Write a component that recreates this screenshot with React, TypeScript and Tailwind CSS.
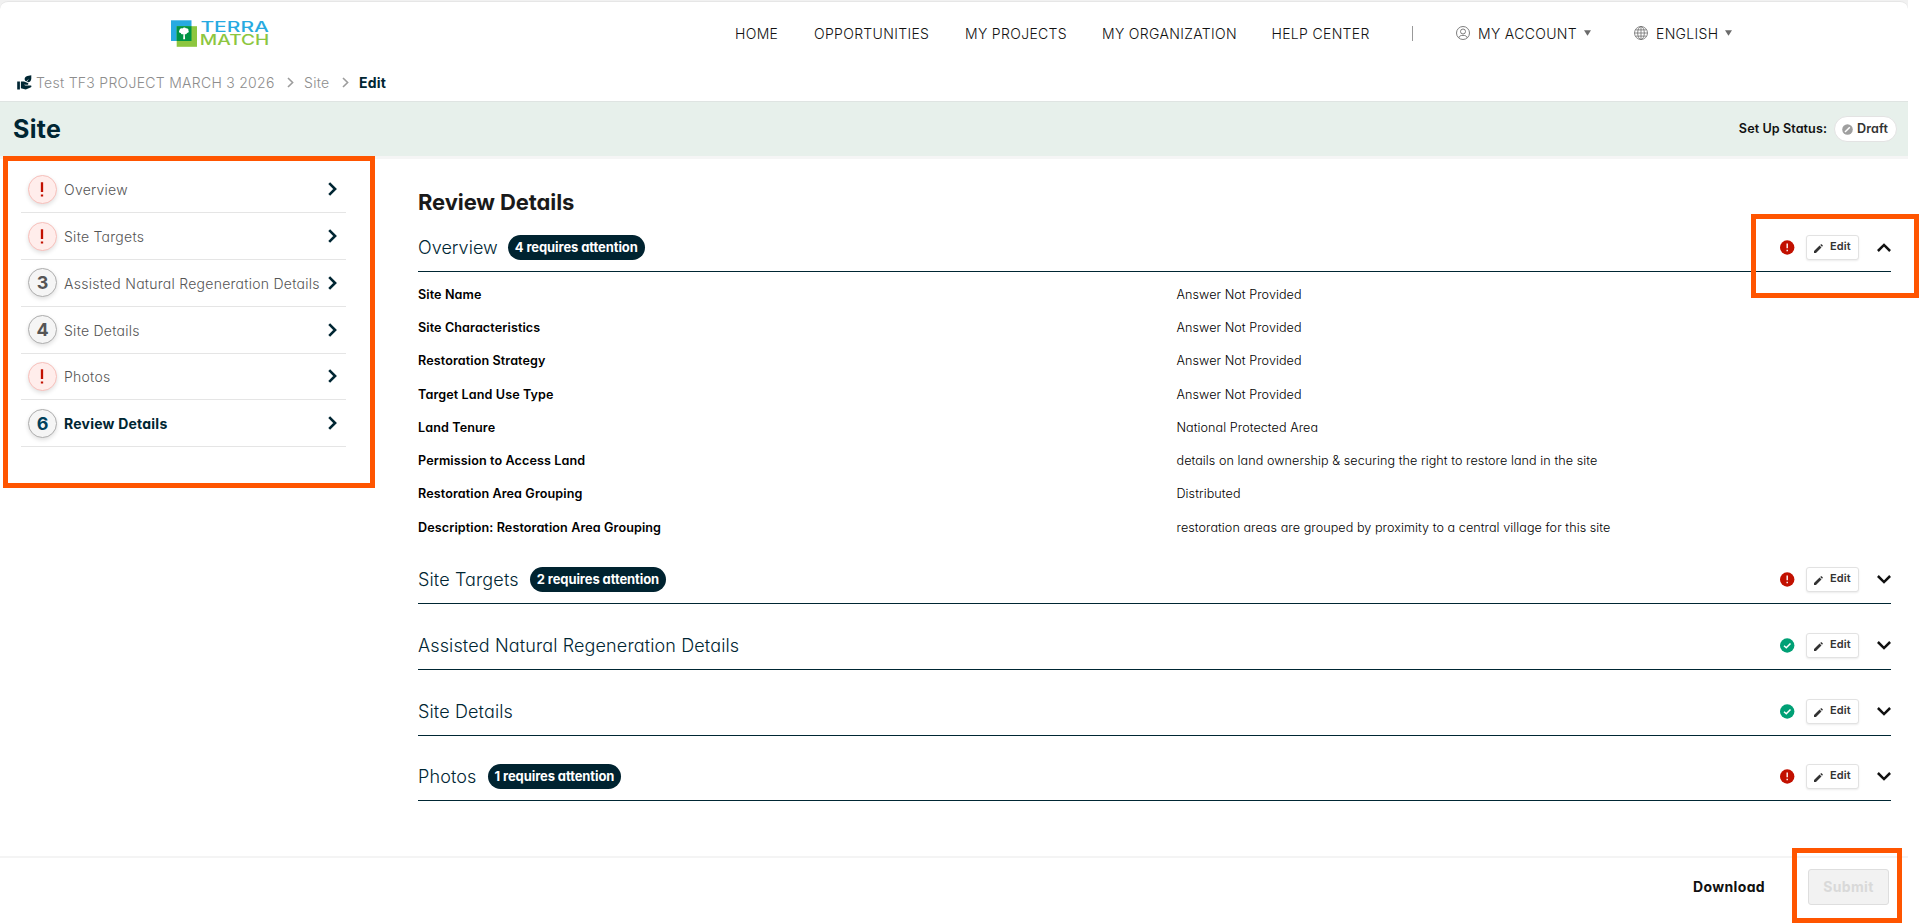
import { ReactNode } from "react";

const sections = [
  { title: "Site Targets", count: 2, height: "h-[66px]" },
  { title: "Assisted Natural Regeneration Details", count: 0, height: "h-[66px]" },
  { title: "Site Details", count: 0, height: "h-[66px]" },
  { title: "Photos", count: 1, height: "h-[65px]" },
];

const steps = [
  { n: 1, label: "Overview", error: true },
  { n: 2, label: "Site Targets", error: true },
  { n: 3, label: "Assisted Natural Regeneration Details", error: false },
  { n: 4, label: "Site Details", error: false },
  { n: 5, label: "Photos", error: true },
  { n: 6, label: "Review Details", error: false, active: true },
];

const fields = [
  ["Site Name", "Answer Not Provided"],
  ["Site Characteristics", "Answer Not Provided"],
  ["Restoration Strategy", "Answer Not Provided"],
  ["Target Land Use Type", "Answer Not Provided"],
  ["Land Tenure", "National Protected Area"],
  ["Permission to Access Land", "details on land ownership & securing the right to restore land in the site"],
  ["Restoration Area Grouping", "Distributed"],
  ["Description: Restoration Area Grouping", "restoration areas are grouped by proximity to a central village for this site"],
];

function Logo() {
  return (
    <svg className="ml-[171px] mt-[18px] h-[30px] w-[100px] overflow-visible" viewBox="0 0 100 30">
      <rect x="0" y="0.3" width="20.5" height="20.7" fill="#27aae1" />
      <rect x="5.7" y="6.2" width="20.3" height="20.6" fill="#8dc63f" />
      <rect x="5.7" y="6.2" width="14.8" height="14.8" fill="#009444" />
      <path
        d="M12.2 19.3 L12.4 14.2 C10.9 14.6 9.8 14 9.9 13 C7.9 13 7.3 11 8.7 10 C8.5 8.6 10.2 7.8 11.4 8.4 C12.2 7 14.5 7.1 15 8.4 C16.6 8.1 17.8 9.2 17.4 10.5 C18.4 11.7 17.4 13 15.9 13 C15.9 14.1 14.8 14.5 13.8 14.2 L14.1 19.3 Z"
        fill="#fff"
      />
      <g fontFamily="Inter, sans-serif" fontSize="14" fontWeight="500">
        <text x="29.4" y="12.4" fill="#27aae1" textLength="68.5" lengthAdjust="spacingAndGlyphs">TERRA</text>
        <text x="28.8" y="25.2" fill="#8dc63f" textLength="69.5" lengthAdjust="spacingAndGlyphs">MATCH</text>
      </g>
    </svg>
  );
}

function Caret() {
  return (
    <svg className="h-[6px] w-[7px]" viewBox="0 0 7 6">
      <path d="M0 0.3H7L3.5 5.7Z" fill="#6b6b6b" />
    </svg>
  );
}

function UserIcon() {
  return (
    <svg className="h-[14px] w-[14px]" viewBox="0 0 14 14" fill="none" stroke="#6f6f6f" strokeWidth="0.9">
      <circle cx="7" cy="7" r="6.5" />
      <circle cx="7" cy="5.5" r="2.5" />
      <path d="M2.8 11.8C3.2 10 4.6 9.4 7 9.4S10.8 10 11.2 11.8" />
    </svg>
  );
}

function GlobeIcon() {
  return (
    <svg className="h-[14px] w-[14px]" viewBox="0 0 14 14" fill="none" stroke="#6f6f6f" strokeWidth="0.8">
      <circle cx="7" cy="7" r="6.5" />
      <ellipse cx="7" cy="7" rx="3.3" ry="6.5" />
      <path d="M7 .5V13.5M.5 7H13.5M1.3 3.9H12.7M1.3 10.1H12.7" />
    </svg>
  );
}

function ProjectIcon() {
  return (
    <svg className="h-[15px] w-[15px]" viewBox="0 0 15 15" fill="#002633">
      <rect x="0.2" y="6.5" width="2.7" height="8" />
      <path d="M3.9 6.5H7L10.8 8C11.5 8.3 11.6 9.4 10.9 9.7H8.3L7.6 9.5L7.4 10L8.3 10.4H11.3L14.1 10.5C14.6 11 14.6 11.8 14 12.2L8.8 14.6L3.9 13.3Z" />
      <path d="M14.3 0.3V3.6C14.3 6.6 12.2 7.7 10 7.1L11.8 3.7L9.3 6.6C7.2 5.5 7 2.8 9.2 1.5C10.8.7 12.5 1 14.3.3Z" />
    </svg>
  );
}

function Crumb() {
  return (
    <svg className="h-[11px] w-[7px]" viewBox="0 0 7 11" fill="none" stroke="#9c9c9c" strokeWidth="1.6">
      <path d="M1 1L5.6 5.5L1 10" />
    </svg>
  );
}

function Chevron({ dir }: { dir: "up" | "down" | "right" }) {
  if (dir === "right") {
    return (
      <svg className="h-[14px] w-[9px]" viewBox="0 0 9 14" fill="none" stroke="#002633" strokeWidth="2.6">
        <path d="M1.2 1.1L7.1 7L1.2 12.9" />
      </svg>
    );
  }
  return (
    <svg className="h-[9px] w-[14px]" viewBox="0 0 14 9" fill="none" stroke="#111" strokeWidth="2.5">
      <path d={dir === "up" ? "M.9 8L7 1.9L13.1 8" : "M.9 1L7 7.1L13.1 1"} />
    </svg>
  );
}

function StatusIcon({ ok }: { ok: boolean }) {
  return (
    <svg className="h-[15px] w-[15px]" viewBox="0 0 15 15" fill="none">
      <circle cx="7.2" cy="7.5" r="7.2" fill={ok ? "#00a075" : "#c21000"} />
      {ok ? (
        <path d="M4 7.7L6.300 9.800L10.500 5.500" stroke="#fff" strokeWidth="1.500" />
      ) : (
        <path d="M7.200 3.600V8.300M7.200 9.700V11.200" stroke="#fff" strokeWidth="1.400" />
      )}
    </svg>
  );
}

function SectionHeader({ title, count, height, open }: { title: string; count: number; height: string; open?: boolean }) {
  return (
    <div className={`flex items-end border-b border-[#002633] pb-[11px] ${height}`}>
      <div className="flex h-[25px] flex-1 items-center">
        <h2 className={`pt-px text-lg font-light text-[#002633] ${open ? "tracking-[0.03px]" : "tracking-[0.13px]"}`}>{title}</h2>
        {count > 0 && (
          <span className={`flex h-[25px] items-center rounded-full bg-[#002330] px-[7px] pt-px text-[13px] font-bold tracking-[-0.09px] text-white ${open ? "ml-[10px]" : "ml-[11px]"}`}>
            {count} requires attention
          </span>
        )}
      </div>
      <div className="flex h-[25px] items-center">
        <StatusIcon ok={count === 0} />
        <button className="ml-[11px] flex h-[25px] w-[53px] items-center rounded-[3px] border border-[#e2e2e2] bg-white pl-[7px] shadow-[0_1px_2px_rgba(0,0,0,0.08)]">
          <svg className="mt-px h-[9px] w-[9px]" viewBox="0 0 10 10" fill="#333">
            <path d="M0 10V7.800L6.200 1.700L8.300 3.800L2.200 10ZM6.900 1.100L7.800.3Q8.100 0 8.500.4L9.600 1.500Q10 1.900 9.700 2.200L8.900 3.100Z" />
          </svg>
          <span className="mb-[3px] ml-[7px] text-[11px] font-semibold tracking-[0.1px] text-[#333]">Edit</span>
        </button>
        <span className="ml-[18px] flex w-[14px]"><Chevron dir={open ? "up" : "down"} /></span>
      </div>
    </div>
  );
}

function NavItem({ width, children }: { width: string; children: ReactNode }) {
  return <a className={`shrink-0 whitespace-nowrap ${width}`}>{children}</a>;
}

export default function App() {
  return (
    <div className="relative flex h-[923px] w-[1920px] flex-col overflow-hidden bg-white font-['Inter',sans-serif] text-[#111] [font-feature-settings:'cv11']">
      <div className="h-[101px] w-[1908px] bg-[#f1f1f1] pt-px">
        <header className="flex h-full flex-col rounded-t-lg border-t border-[#e6e6e6] bg-white">
          <div className="flex h-[64px] items-start">
            <Logo />
            <nav className="ml-[464px] mt-[20px] flex h-[22px] items-center whitespace-nowrap text-[14px] font-light tracking-[0.33px] text-[#111]">
              <NavItem width="w-[79px]">HOME</NavItem>
              <NavItem width="w-[151px]">OPPORTUNITIES</NavItem>
              <NavItem width="w-[137px]">MY PROJECTS</NavItem>
              <NavItem width="w-[169.5px]">MY ORGANIZATION</NavItem>
              <NavItem width="w-[140.5px]">HELP CENTER</NavItem>
              <span className="h-[15px] w-px bg-[#999]" />
              <span className="ml-[43px] flex w-[178px] items-center">
                <UserIcon />
                <span className="ml-[8px] mr-[7px] w-[99px]">MY ACCOUNT</span>
                <Caret />
              </span>
              <span className="flex items-center">
                <GlobeIcon />
                <span className="ml-[8px] mr-[7px] w-[62px]">ENGLISH</span>
                <Caret />
              </span>
            </nav>
          </div>
          <div className="ml-[17px] mt-[6px] flex h-[21px] items-center text-[14px] font-light text-[#8d8d8d]">
            <ProjectIcon />
            <span className="ml-[4px] w-[251px] tracking-[0.28px]">Test TF3 PROJECT MARCH 3 2026</span>
            <Crumb />
            <span className="ml-[10px] w-[38px] tracking-[0.28px]">Site</span>
            <Crumb />
            <span className="ml-[10px] font-bold tracking-[0.25px] text-[#002633]">Edit</span>
          </div>
        </header>
      </div>

      <div className="flex h-[55px] w-[1908px] shrink-0 items-center border-t border-[#dfe4e2] bg-[#e7f0eb] pl-[13px] pr-[11px] shadow-[0_3px_0_#f5f5f5]">
        <h1 className="flex-1 pt-px text-[25px] font-bold tracking-[0.3px] text-[#002633]">Site</h1>
        <span className="mr-[7px] text-[12.6px] font-semibold tracking-[0.08px]">Set Up Status:</span>
        <span className="flex h-[26px] w-[63px] items-center rounded-full border border-[#e3e3e3] bg-white pl-[7px]">
          <svg className="h-[11px] w-[11px]" viewBox="0 0 11 11">
            <circle cx="5.5" cy="5.5" r="5.3" fill="#9f9f9f" />
            <path d="M3 8L7.8 3.2" stroke="#fff" strokeWidth="1.5" />
          </svg>
          <span className="ml-[4px] text-[12.6px] font-semibold tracking-[0.1px] text-[#333]">Draft</span>
        </span>
      </div>

      <div className="flex flex-1">
        <aside className="ml-[21px] w-[325px] pt-[10.4px]">
          {steps.map((s) => (
            <div key={s.n} className="flex h-[46.8px] items-center border-b border-[#e5e5e5] pl-[7px] pr-[9px]">
              <span
                className={`flex h-[29px] w-[29px] shrink-0 items-center justify-center rounded-full border text-[18px] font-bold shadow-[0_2px_4px_rgba(0,0,0,0.12)] ${
                  s.error
                    ? "border-[#f7c0bb] bg-[#ffedeb]"
                    : s.active
                      ? "border-[#adadad] bg-[#f5f5f5] text-[#00405c]"
                      : "border-[#adadad] bg-[#f5f5f5] text-[#555]"
                }`}
              >
                {s.error ? (
                  <svg className="mr-px h-[15px] w-[4px]" viewBox="0 0 4 15" stroke="#c21000" strokeWidth="2.3">
                    <path d="M2 0.3V10M2 12.4V14.5" />
                  </svg>
                ) : (
                  s.n
                )}
              </span>
              <span
                className={`ml-[7px] flex-1 whitespace-nowrap pt-px text-[14px] ${
                  s.active ? "font-bold tracking-[0.22px] text-[#002633]" : "font-light tracking-[0.26px] text-[#555]"
                }`}
              >
                {s.label}
              </span>
              <Chevron dir="right" />
            </div>
          ))}
        </aside>

        <main className="ml-[72px] w-[1473px] pt-[29px]">
          <h2 className="text-[22px] font-bold leading-[34px] tracking-[-0.1px] text-[#1a1a1a]">Review Details</h2>
          <SectionHeader title="Overview" count={4} height="h-[53px]" open />
          <div className="flex flex-col pt-[6.8px]">
            {fields.map(([k, v]) => (
              <div key={k} className="flex h-[33.25px] items-center text-[12.6px]">
                <span className="w-[758px] font-semibold tracking-[0.1px] text-black">{k}</span>
                <span className="pl-[0.5px] font-light tracking-[0.06px] text-[#000]">{v}</span>
              </div>
            ))}
          </div>
          <div className="-mt-[6.8px]">
            {sections.map((s) => (
              <SectionHeader key={s.title} {...s} />
            ))}
          </div>
        </main>
      </div>

      <footer className="flex h-[67px] w-[1908px] shrink-0 items-center justify-end border-t-2 border-[#f4f4f4] pb-[8px] pr-[19px]">
        <span className="mr-[43px] text-[14px] font-bold tracking-[0.35px]">Download</span>
        <button className="flex h-[36px] w-[81px] items-center justify-center rounded-[3px] border border-[#dedede] bg-[#f2f2f2] text-[14px] font-bold tracking-[0.35px] text-[#d9d9d9]">
          Submit
        </button>
      </footer>

      <div className="absolute left-[3px] top-[156px] h-[332px] w-[372px] border-[5px] border-[#ff5500]" />
      <div className="absolute left-[1751px] top-[214px] h-[84px] w-[168px] border-[5px] border-[#ff5500]" />
      <div className="absolute left-[1792px] top-[848px] h-[75px] w-[110px] border-[5px] border-[#ff5500]" />
    </div>
  );
}
